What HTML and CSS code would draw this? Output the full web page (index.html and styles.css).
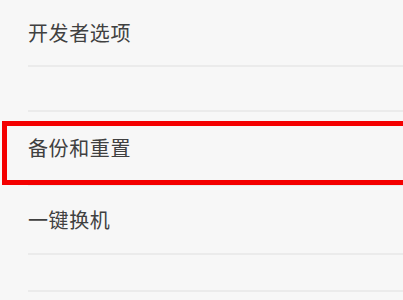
FILE: index.html
```html
<!DOCTYPE html>
<html lang="zh-CN">
<head>
<meta charset="utf-8">
<title>设置</title>
<link rel="stylesheet" href="styles.css">
</head>
<body>
<div class="list">
  <div class="row row-first"><span class="label">开发者选项</span></div>
  <div class="row row-gap"></div>
  <div class="row row-tall"><span class="label">备份和重置</span></div>
  <div class="row row-mid"><span class="label">一键换机</span></div>
  <div class="row row-short"></div>
</div>
<div class="highlight"></div>
</body>
</html>
```

FILE: styles.css
```css
html, body {
  margin: 0;
  padding: 0;
  background: #f7f7f7;
  width: 403px;
  height: 300px;
  overflow: hidden;
  font-family: "Noto Sans CJK SC", "Noto Sans", sans-serif;
}

.list {
  display: flex;
  flex-direction: column;
}

.row {
  margin-left: 28px;
  display: flex;
  align-items: center;
  border-bottom: 2px solid #ebebeb;
}

.label {
  font-size: 20px;
  color: #404040;
  line-height: 1;
  letter-spacing: 0.6px;
}

.row-first { height: 65px; }
.row-gap { height: 43px; }
.row-tall { height: 72px; }
.row-mid { height: 67px; }
.row-short { height: 35px; }

.highlight {
  position: absolute;
  left: 2px;
  right: 0;
  top: 121px;
  height: 54px;
  border: 5px solid #f40000;
  border-right: none;
}
```
